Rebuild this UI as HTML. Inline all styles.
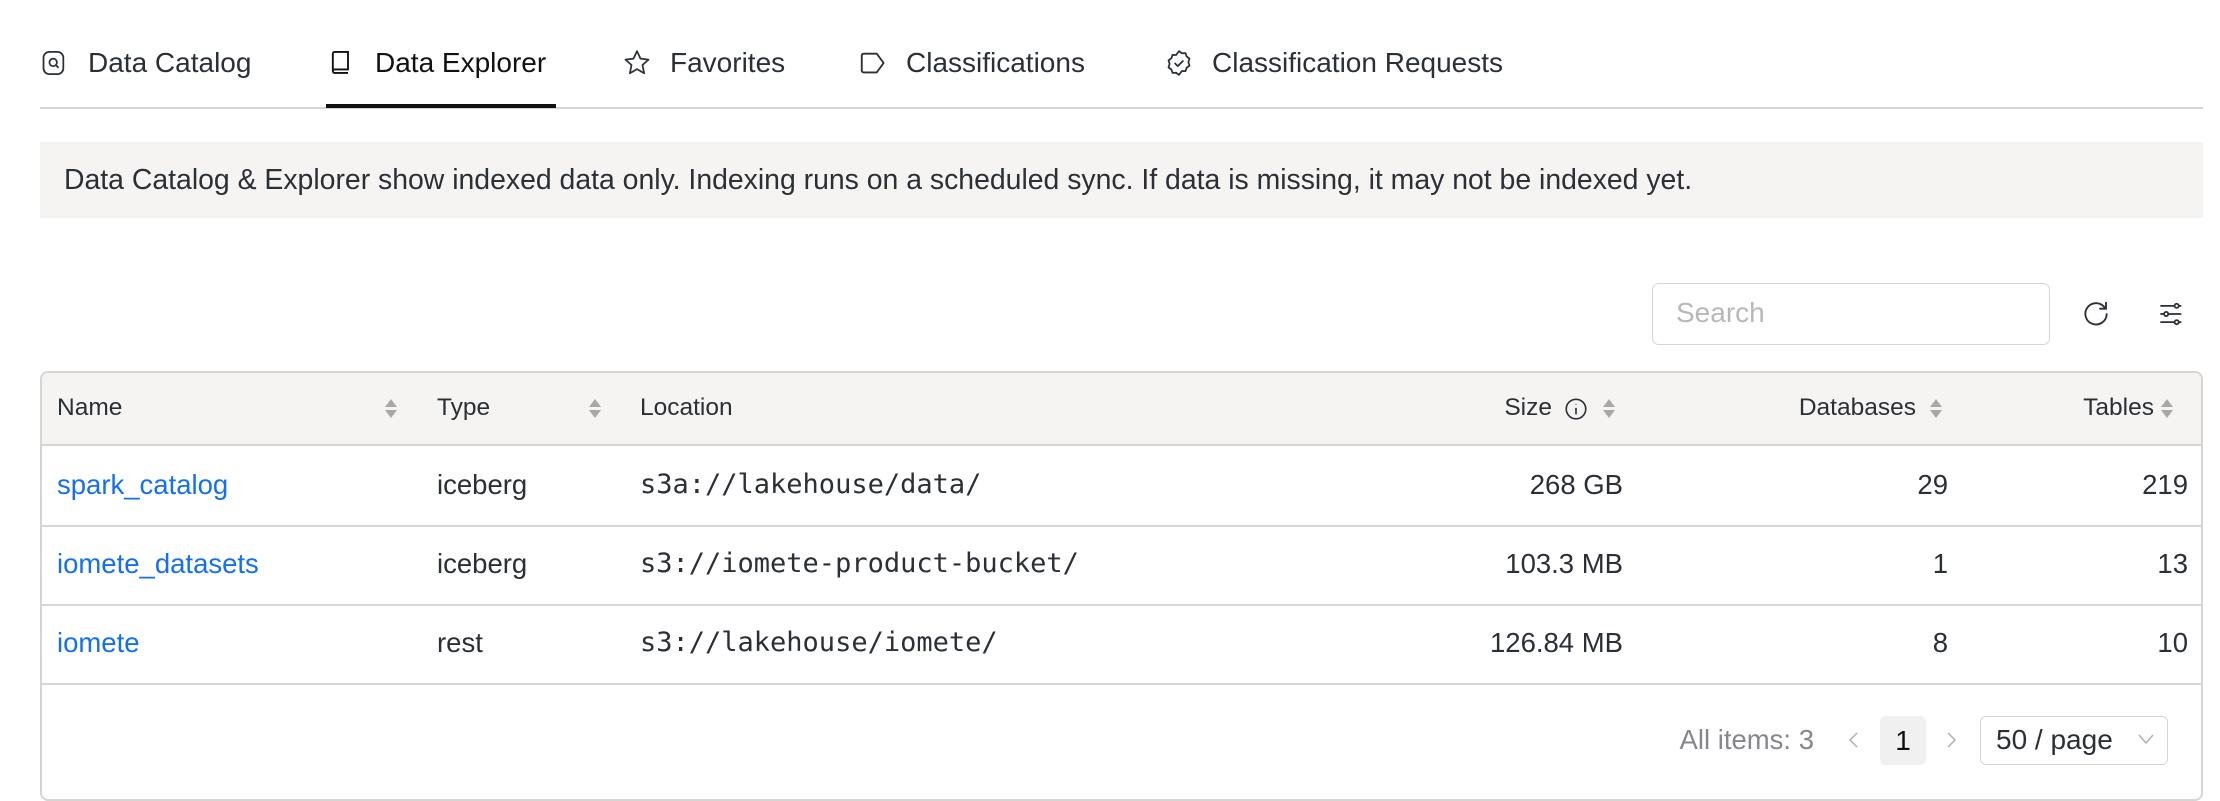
<!DOCTYPE html>
<html><head><meta charset="utf-8"><style>
*{box-sizing:border-box;margin:0;padding:0}
body{width:2220px;height:784px;overflow:hidden;background:#fff;font-family:"Liberation Sans",Arial,sans-serif;color:#2b2f36;position:relative}
.abs{position:absolute}
.tab{position:absolute;top:46px;font-size:28px;color:#2b2f36;white-space:nowrap;line-height:34px}
.tab svg{position:absolute;left:-48px;top:2px}
.hd{position:absolute;font-size:24.5px;top:393px;line-height:30px;color:#2b2f36;white-space:nowrap}
.cell{position:absolute;font-size:27.5px;line-height:34px;white-space:nowrap}
.mono{font-family:"DejaVu Sans Mono","Liberation Mono",monospace;font-size:27px}
.link{color:#1570ef}
.r{text-align:right}
.sort{position:absolute;top:396px;width:14px;height:24px}
</style></head><body>
<div class="tab" style="left:88px"><svg width="28" height="30" viewBox="0 0 24 24" fill="none" stroke="#2b2f36" stroke-width="1.5"><rect x="3" y="2.5" width="17" height="19" rx="5"/><circle cx="11.3" cy="11.5" r="3.2"/><path d="M13.6 13.8l2.3 2.3"/></svg>Data Catalog</div>
<div class="tab" style="left:375px;color:#111"><svg width="28" height="30" viewBox="0 0 24 24" fill="none" stroke="#111" stroke-width="1.6"><path d="M5 19.5V4A1.5 1.5 0 0 1 6.5 2.5H18v15H6.5A1.5 1.5 0 0 0 5 19 1.5 1.5 0 0 0 6.5 20.5H18"/></svg>Data Explorer</div>
<div class="tab" style="left:670px"><svg width="30" height="30" viewBox="0 0 24 24" fill="none" stroke="#2b2f36" stroke-width="1.4" stroke-linejoin="round"><path d="M12 2.5l2.8 6 6.4.8-4.8 4.3 1.3 6.6L12 16.9 6.3 20.2l1.3-6.6L2.8 9.3l6.4-.8z"/></svg>Favorites</div>
<div class="tab" style="left:906px"><svg width="30" height="30" viewBox="0 0 24 24" fill="none" stroke="#2b2f36" stroke-width="1.5"><path d="M4.5 4.5h10.5l5.5 7.5-5.5 7.5H4.5A1.5 1.5 0 0 1 3 18V6A1.5 1.5 0 0 1 4.5 4.5z" stroke-linejoin="round"/></svg>Classifications</div>
<div class="tab" style="left:1212px"><svg width="30" height="30" viewBox="0 0 24 24" fill="none" stroke="#2b2f36" stroke-width="1.4" stroke-linejoin="round"><path d="M12 2.5l2.3 1.7 2.9-.1.9 2.7 2.3 1.7-.9 2.8.9 2.8-2.3 1.7-.9 2.7-2.9-.1L12 21.5l-2.3-1.7-2.9.1-.9-2.7-2.3-1.7.9-2.8-.9-2.8 2.3-1.7.9-2.7 2.9.1z"/><path d="M8.5 12l2.5 2.5 4.5-4.5"/></svg>Classification Requests</div>
<div class="abs" style="left:40px;top:107px;width:2163px;height:2px;background:#d6d5d1"></div>
<div class="abs" style="left:326px;top:104px;width:230px;height:4px;background:#111"></div>
<div class="abs" style="left:40px;top:142px;width:2163px;height:76px;background:#f5f4f2"></div>
<div class="abs" style="left:64px;top:163px;font-size:28.4px;line-height:34px;white-space:nowrap">Data Catalog &amp; Explorer show indexed data only. Indexing runs on a scheduled sync. If data is missing, it may not be indexed yet.</div>
<div class="abs" style="left:1652px;top:283px;width:398px;height:62px;border:1.5px solid #d6d5d1;border-radius:7px;font-size:28px;color:#b8b8b8;padding:13px 23px">Search</div>
<svg class="abs" style="left:2080px;top:298px" width="32" height="32" viewBox="0 0 24 24" fill="none" stroke="#2b2f36" stroke-width="1.4" stroke-linecap="round"><path d="M19 8A8 8 0 1 0 20 12"/><path d="M19.5 3.5V8H15"/></svg>
<svg class="abs" style="left:2158px;top:300px" width="28" height="28" viewBox="0 0 24 24" fill="none" stroke="#2b2f36" stroke-width="1.5"><path d="M2 5h12M18 5h2M2 12h3M9 12h11M2 19h12M18 19h2"/><circle cx="16" cy="5" r="1.8"/><circle cx="7" cy="12" r="1.8"/><circle cx="16" cy="19" r="1.8"/></svg>
<div class="abs" style="left:40px;top:371px;width:2163px;height:430px;border:2px solid #d6d5d1;border-radius:8px"></div>
<div class="abs" style="left:42px;top:373px;width:2159px;height:73px;background:#f5f4f2;border-radius:6px 6px 0 0;border-bottom:2px solid #d6d5d1"></div>
<div class="abs" style="left:42px;top:525px;width:2159px;height:2px;background:#d6d5d1"></div>
<div class="abs" style="left:42px;top:604px;width:2159px;height:2px;background:#d6d5d1"></div>
<div class="abs" style="left:42px;top:683px;width:2159px;height:2px;background:#d6d5d1"></div>
<div class="hd" style="left:57px">Name</div>
<div class="hd" style="left:437px">Type</div>
<div class="hd" style="left:640px">Location</div>
<div class="hd" style="left:1452px;width:100px;text-align:right">Size</div>
<svg class="abs" style="left:1563px;top:396px" width="26" height="26" viewBox="0 0 24 24" fill="none" stroke="#2b2f36" stroke-width="1.5"><circle cx="12" cy="12" r="9"/><path d="M12 11v6M12 7.5v.5"/></svg>
<div class="hd" style="left:1700px;width:216px;text-align:right">Databases</div>
<div class="hd" style="left:2000px;width:154px;text-align:right">Tables</div>
<svg class="sort" style="left:384px" viewBox="0 0 14 24"><path d="M7 3l6 8H1z" fill="#a8a8a8"/><path d="M7 22l6-8H1z" fill="#a8a8a8"/></svg>
<svg class="sort" style="left:588px" viewBox="0 0 14 24"><path d="M7 3l6 8H1z" fill="#a8a8a8"/><path d="M7 22l6-8H1z" fill="#a8a8a8"/></svg>
<svg class="sort" style="left:1602px" viewBox="0 0 14 24"><path d="M7 3l6 8H1z" fill="#a8a8a8"/><path d="M7 22l6-8H1z" fill="#a8a8a8"/></svg>
<svg class="sort" style="left:1929px" viewBox="0 0 14 24"><path d="M7 3l6 8H1z" fill="#a8a8a8"/><path d="M7 22l6-8H1z" fill="#a8a8a8"/></svg>
<svg class="sort" style="left:2160px" viewBox="0 0 14 24"><path d="M7 3l6 8H1z" fill="#a8a8a8"/><path d="M7 22l6-8H1z" fill="#a8a8a8"/></svg>

<div class="cell link" style="left:57px;top:468px">spark_catalog</div>
<div class="cell" style="left:437px;top:468px">iceberg</div>
<div class="cell mono" style="left:640px;top:468px">s3a://lakehouse/data/</div>
<div class="cell r" style="left:1400px;width:223px;top:468px">268 GB</div>
<div class="cell r" style="left:1800px;width:148px;top:468px">29</div>
<div class="cell r" style="left:2040px;width:148px;top:468px">219</div>

<div class="cell link" style="left:57px;top:547px">iomete_datasets</div>
<div class="cell" style="left:437px;top:547px">iceberg</div>
<div class="cell mono" style="left:640px;top:547px">s3://iomete-product-bucket/</div>
<div class="cell r" style="left:1400px;width:223px;top:547px">103.3 MB</div>
<div class="cell r" style="left:1800px;width:148px;top:547px">1</div>
<div class="cell r" style="left:2040px;width:148px;top:547px">13</div>

<div class="cell link" style="left:57px;top:626px">iomete</div>
<div class="cell" style="left:437px;top:626px">rest</div>
<div class="cell mono" style="left:640px;top:626px">s3://lakehouse/iomete/</div>
<div class="cell r" style="left:1400px;width:223px;top:626px">126.84 MB</div>
<div class="cell r" style="left:1800px;width:148px;top:626px">8</div>
<div class="cell r" style="left:2040px;width:148px;top:626px">10</div>

<div class="cell r" style="left:1600px;width:214px;top:723px;color:#85878b">All items: 3</div>
<svg class="abs" style="left:1845px;top:728px" width="18" height="24" viewBox="0 0 18 24" fill="none" stroke="#b0b0b0" stroke-width="1.5"><path d="M12 5L5 12l7 7"/></svg>
<div class="abs" style="left:1880px;top:716px;width:46px;height:49px;background:#f0f0f0;border-radius:6px;font-size:28px;text-align:center;line-height:49px;color:#111">1</div>
<svg class="abs" style="left:1942px;top:728px" width="18" height="24" viewBox="0 0 18 24" fill="none" stroke="#b0b0b0" stroke-width="1.5"><path d="M6 5l7 7-7 7"/></svg>
<div class="abs" style="left:1980px;top:716px;width:188px;height:49px;border:1.5px solid #d6d5d1;border-radius:6px;font-size:28px;line-height:46px;padding-left:15px;color:#2b2f36;white-space:nowrap">50 / page</div>
<svg class="abs" style="left:2136px;top:731px" width="20" height="16" viewBox="0 0 20 16" fill="none" stroke="#b0b0b0" stroke-width="1.5"><path d="M3 4l7 8 7-8"/></svg>
</body></html>
